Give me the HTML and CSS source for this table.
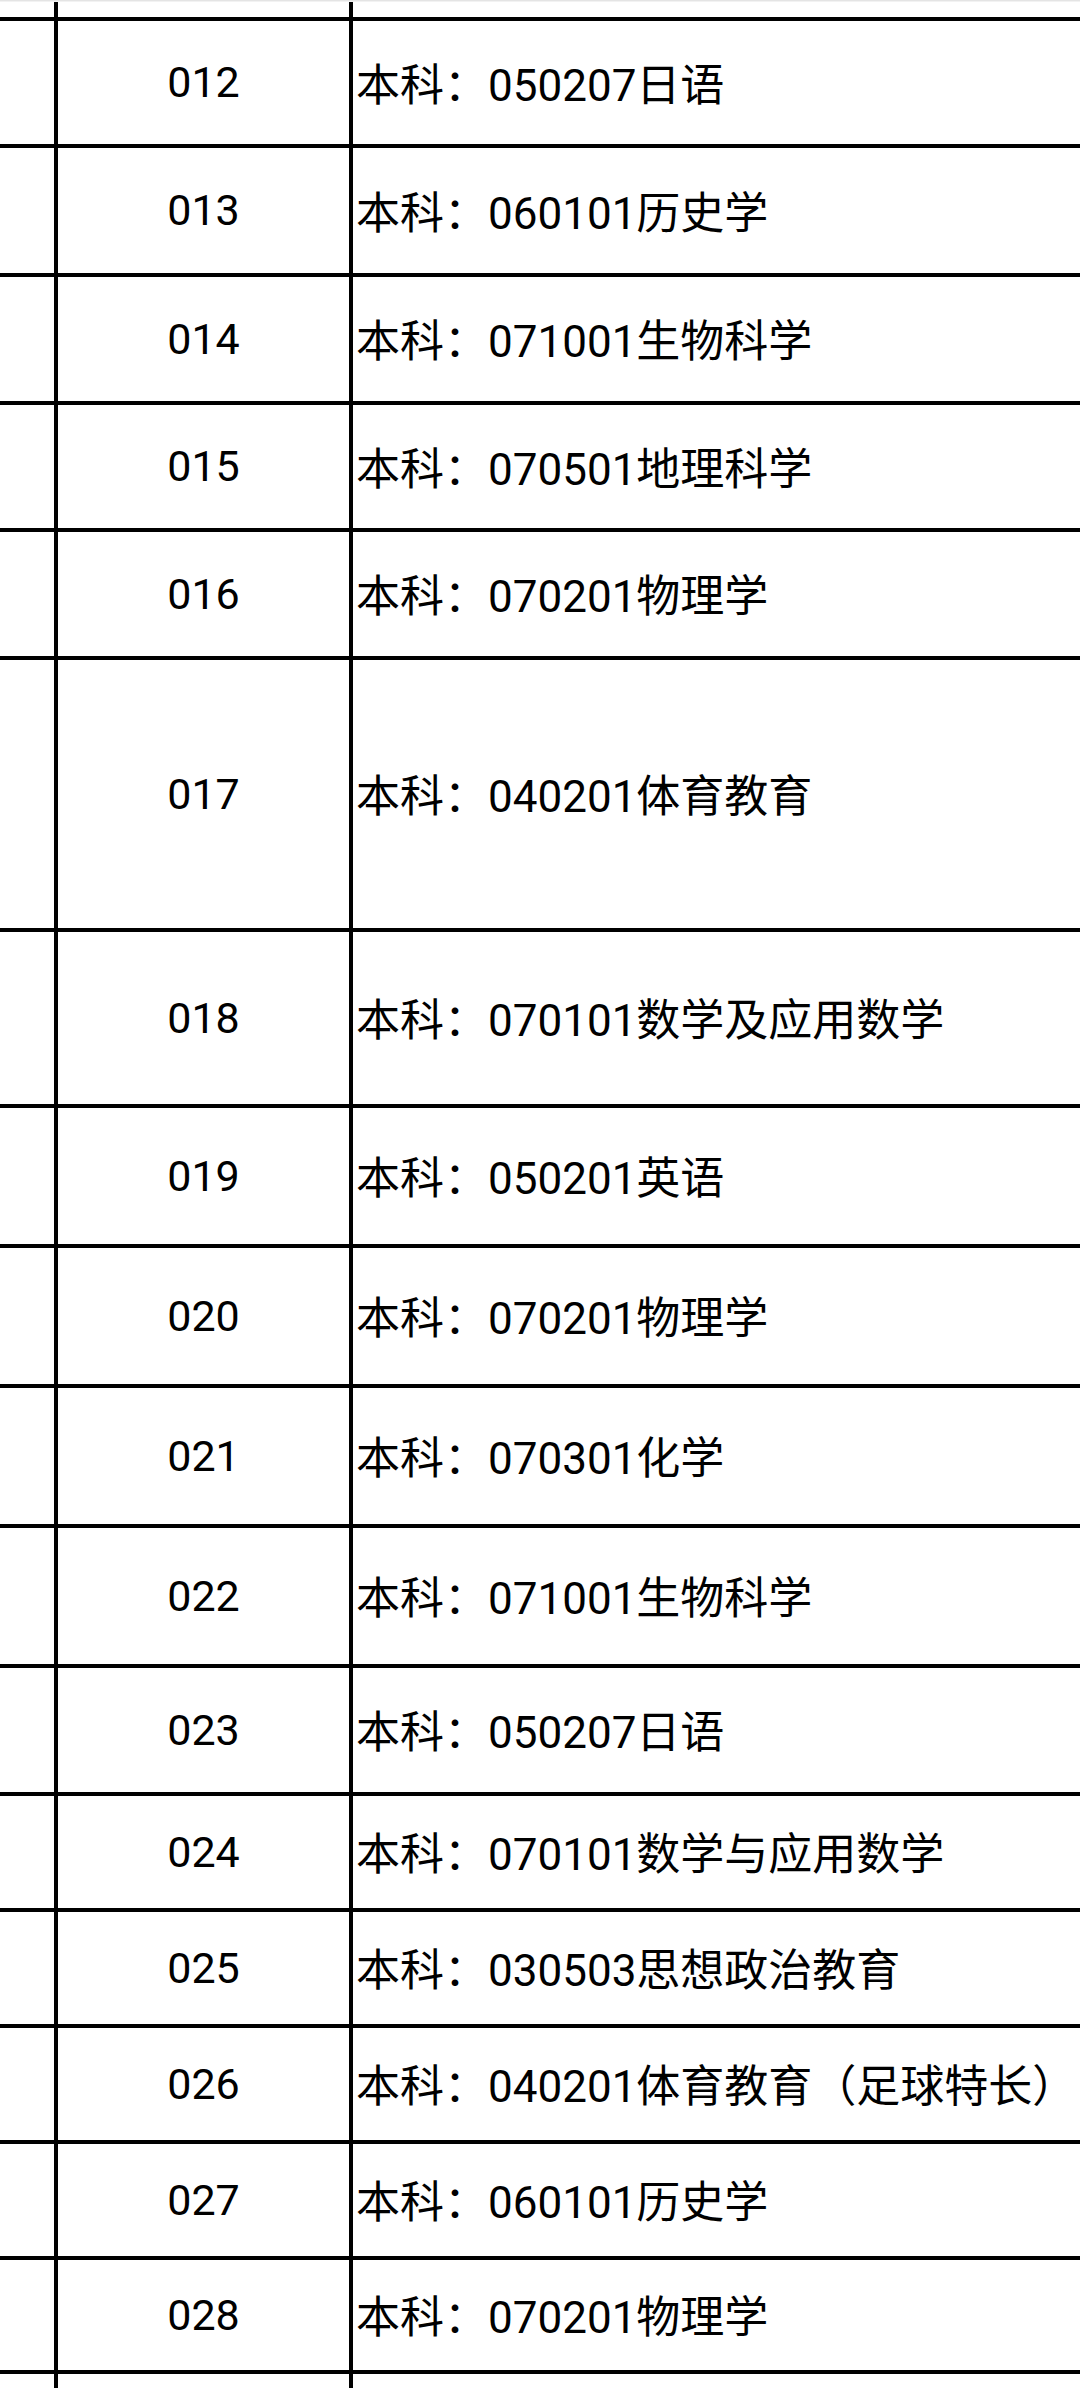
FILE: index.html
```html
<!DOCTYPE html>
<html lang="zh-CN">
<head>
<meta charset="utf-8">
<title>专业代码表</title>
<link rel="stylesheet" href="styles.css">
</head>
<body>
<div class="topline"></div>
<div class="sheet">
  <div class="row partial"><div class="c0"></div><div class="c1"></div><div class="c2"></div></div>
  <div class="row h127"><div class="c0"></div><div class="c1">012</div><div class="c2">本科：050207日语</div></div>
  <div class="row h129"><div class="c0"></div><div class="c1">013</div><div class="c2">本科：060101历史学</div></div>
  <div class="row h128"><div class="c0"></div><div class="c1">014</div><div class="c2">本科：071001生物科学</div></div>
  <div class="row h127"><div class="c0"></div><div class="c1">015</div><div class="c2">本科：070501地理科学</div></div>
  <div class="row h128"><div class="c0"></div><div class="c1">016</div><div class="c2">本科：070201物理学</div></div>
  <div class="row h272"><div class="c0"></div><div class="c1">017</div><div class="c2">本科：040201体育教育</div></div>
  <div class="row h176"><div class="c0"></div><div class="c1">018</div><div class="c2">本科：070101数学及应用数学</div></div>
  <div class="row h140"><div class="c0"></div><div class="c1">019</div><div class="c2">本科：050201英语</div></div>
  <div class="row h140"><div class="c0"></div><div class="c1">020</div><div class="c2">本科：070201物理学</div></div>
  <div class="row h140"><div class="c0"></div><div class="c1">021</div><div class="c2">本科：070301化学</div></div>
  <div class="row h140"><div class="c0"></div><div class="c1">022</div><div class="c2">本科：071001生物科学</div></div>
  <div class="row h128"><div class="c0"></div><div class="c1">023</div><div class="c2">本科：050207日语</div></div>
  <div class="row h116"><div class="c0"></div><div class="c1">024</div><div class="c2">本科：070101数学与应用数学</div></div>
  <div class="row h116"><div class="c0"></div><div class="c1">025</div><div class="c2">本科：030503思想政治教育</div></div>
  <div class="row h116"><div class="c0"></div><div class="c1">026</div><div class="c2">本科：040201体育教育（足球特长）</div></div>
  <div class="row h116"><div class="c0"></div><div class="c1">027</div><div class="c2">本科：060101历史学</div></div>
  <div class="row h114"><div class="c0"></div><div class="c1">028</div><div class="c2">本科：070201物理学</div></div>
  <div class="row h114"><div class="c0"></div><div class="c1"></div><div class="c2"></div></div>
</div>
</body>
</html>
```
FILE: styles.css
```css
* { box-sizing: border-box; }
html, body {
  margin: 0;
  padding: 0;
  background: #fff;
  overflow: hidden;
}
body {
  width: 1080px;
  height: 2388px;
  font-family: Roboto, "Noto Sans CJK SC", sans-serif;
  color: #000;
}
.topline {
  height: 2px;
  background: #e4e4e4;
  border-bottom: 1px solid #f2f2f2;
}
.sheet {
  display: flex;
  flex-direction: column;
  width: 100%;
}
.row {
  display: flex;
  border-top: 4px solid #000;
  line-height: 1;
}
.row.partial {
  border-top: none;
  height: 15px;
}
.c0 {
  width: 58px;
  flex: none;
  border-right: 4px solid #000;
}
.c1 {
  width: 295px;
  flex: none;
  border-right: 4px solid #000;
  display: flex;
  align-items: center;
  justify-content: center;
  font-size: 43px;
}
.c2 {
  flex: 1;
  display: flex;
  align-items: center;
  padding-left: 3px;
  padding-top: 6px;
  white-space: nowrap;
  overflow: hidden;
  font-size: 44px;
}
.h114 { height: 114px; }
.h116 { height: 116px; }
.h127 { height: 127px; }
.h128 { height: 128px; }
.h129 { height: 129px; }
.h140 { height: 140px; }
.h176 { height: 176px; }
.h272 { height: 272px; }
```
